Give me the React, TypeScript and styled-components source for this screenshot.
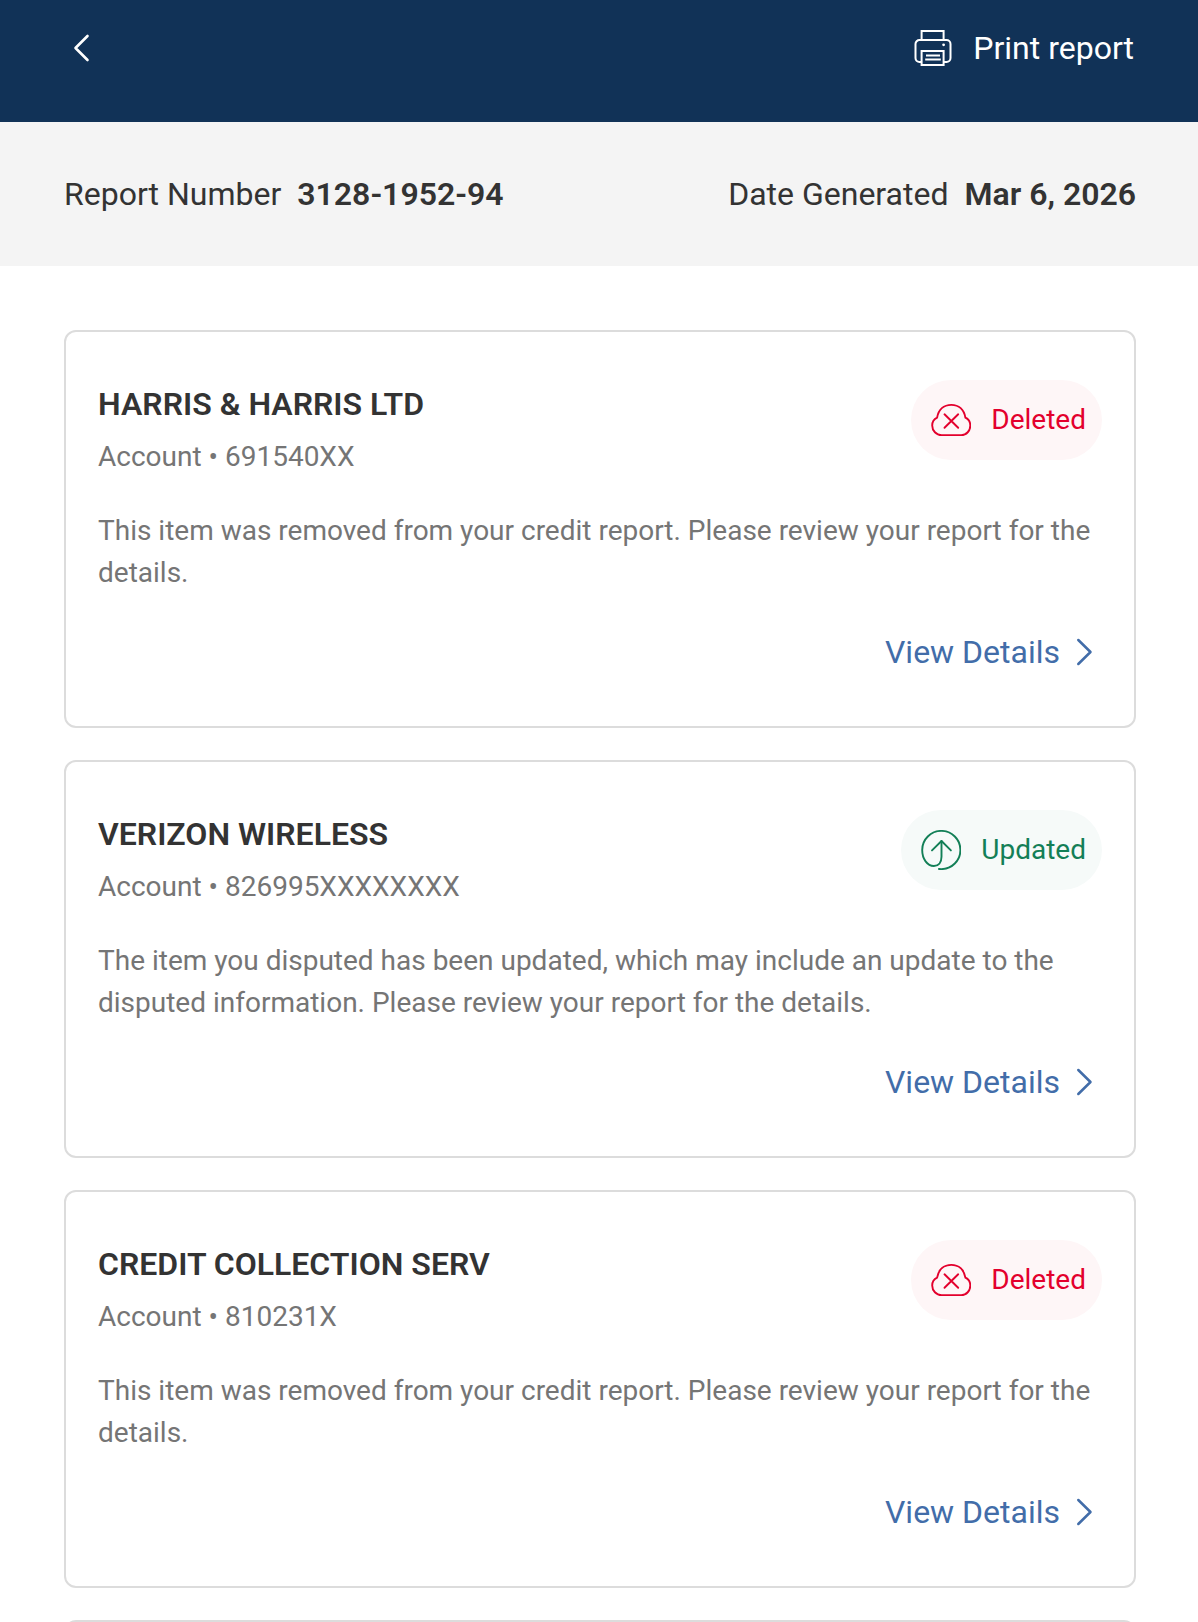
import React from "react";
import styled, { createGlobalStyle } from "styled-components";

const GlobalStyle = createGlobalStyle`
  *, *::before, *::after { box-sizing: border-box; }
  html, body { margin: 0; background: #fff; }
  body {
    font-family: Roboto, "Liberation Sans", sans-serif;
    color: #333;
    height: 1622px;
    overflow: hidden;
  }
`;

const Page = styled.div`
  height: 1622px;
  overflow: hidden;
  display: flex;
  flex-direction: column;
`;

const TopBar = styled.header`
  flex: none;
  height: 122px;
  padding: 24px 62px 0 64px;
  display: flex;
  justify-content: space-between;
  align-items: flex-start;
  background: #113257;
  color: #fff;
`;

const IconButton = styled.button`
  display: flex;
  align-items: center;
  height: 48px;
  padding: 0 0 0 8px;
  border: 0;
  background: none;
  color: inherit;
`;

const PrintButton = styled(IconButton)`
  gap: 21px;
  padding: 0 2px 0 0;
  font: 400 32px/48px Roboto, "Liberation Sans", sans-serif;
`;

const SummaryBar = styled.section`
  flex: none;
  height: 144px;
  padding: 48px 62px 48px 64px;
  display: flex;
  justify-content: space-between;
  background: #f4f4f4;
  font-size: 32px;
  line-height: 48px;
`;

const SummaryItem = styled.div`
  display: flex;
  gap: 16px;
`;

const SummaryLabel = styled.span`
  font-weight: 400;
`;

const SummaryValue = styled.strong`
  font-weight: 600;
`;

const CardList = styled.main`
  padding: 64px 62px 0 64px;
  display: flex;
  flex-direction: column;
  gap: 32px;
`;

const Card = styled.article`
  flex: none;
  height: 398px;
  padding: 48px 32px;
  border: 2px solid #dcdcdc;
  border-radius: 12px;
  display: flex;
  flex-direction: column;
`;

const CardHead = styled.div`
  display: flex;
  justify-content: space-between;
  align-items: flex-start;
  height: 98px;
`;

const Creditor = styled.h2`
  margin: 0 0 8px;
  font-size: 32px;
  line-height: 48px;
  font-weight: 600;
`;

const Account = styled.div`
  font-size: 28px;
  line-height: 42px;
  color: #757575;
`;

const Description = styled.p`
  margin: 32px 0 0;
  font-size: 28px;
  line-height: 42px;
  color: #757575;
`;

type Status = "Deleted" | "Updated";

const Badge = styled.div<{ $status: Status }>`
  display: flex;
  align-items: center;
  gap: 20px;
  height: 80px;
  padding: 0 16px 0 20px;
  border-radius: 40px;
  font-size: 28px;
  line-height: 40px;
  color: ${(p) => (p.$status === "Deleted" ? "#e3002d" : "#137f57")};
  background: ${(p) => (p.$status === "Deleted" ? "#fef6f7" : "#f6faf9")};
`;

const DetailsLink = styled.a`
  align-self: flex-end;
  display: flex;
  align-items: center;
  gap: 16px;
  margin-top: 34px;
  padding-right: 8px;
  font-size: 32px;
  line-height: 48px;
  color: #426da9;
`;

const BackIcon = () => (
  <svg width="18" height="28" viewBox="0 0 18 28" fill="none" stroke="currentColor" strokeWidth="2.6" strokeLinecap="round" strokeLinejoin="round">
    <path d="M15.500 2 3.500 14l12 12" />
  </svg>
);

const NextIcon = () => (
  <svg width="18" height="28" viewBox="0 0 18 28" fill="none" stroke="currentColor" strokeWidth="2.5" strokeLinecap="round" strokeLinejoin="round">
    <path d="m2.300 2 12.200 12-12.200 12" />
  </svg>
);

const PrinterIcon = () => (
  <svg width="38" height="36" viewBox="0 0 38 36" fill="none" stroke="currentColor" strokeWidth="2">
    <path d="M7.600 10V1h22v9M7.600 32H5.500a4 4 0 0 1-4-4V14a4 4 0 0 1 4-4h27a4 4 0 0 1 4 4v14a4 4 0 0 1-4 4h-2.900" />
    <path d="M7.600 21h22v14h-22zM12 25.600h14M11.200 29.600h15.600" />
    <circle cx="29.600" cy="14.800" r="1.400" fill="currentColor" stroke="none" />
  </svg>
);

const DeletedIcon = () => (
  <svg width="40" height="40" viewBox="0 0 40 40" fill="none" stroke="currentColor" strokeWidth="1.9" strokeLinecap="round">
    <path d="M10.600 35.100h19.600c5.300 0 9.100-4.400 9.100-9.600 0-3.600-2-6.600-4.900-7.900C33 9.800 27.900 4.900 20.300 4.900S7.500 9.800 6.100 17.600C3.200 18.900 1.200 21.900 1.200 25.500c0 5.200 4.100 9.600 9.400 9.600Z" />
    <path d="m13.500 14.300 13.700 13.500M27.200 14.300 13.500 27.800" />
  </svg>
);

const UpdatedIcon = () => (
  <svg width="40" height="40" viewBox="0 0 40 40" fill="none" stroke="currentColor" strokeWidth="1.9" strokeLinecap="round" strokeLinejoin="round">
    <path d="M17.900 39c.8.100 1.600.100 2.400.100A19.100 19.100 0 1 0 1.200 20c0 9 5.100 16 11.700 16 4.500 0 7.600-3.400 7.600-9.200V11" />
    <path d="M11 20.400 20.500 11l9.400 9.400" />
  </svg>
);

interface Dispute {
  creditor: string;
  account: string;
  status: Status;
}

const disputes: Dispute[] = [
  { creditor: "HARRIS & HARRIS LTD", account: "691540XX", status: "Deleted" },
  { creditor: "VERIZON WIRELESS", account: "826995XXXXXXXX", status: "Updated" },
  { creditor: "CREDIT COLLECTION SERV", account: "810231X", status: "Deleted" },
];

const descriptions: Record<Status, string> = {
  Deleted:
    "This item was removed from your credit report. Please review your report for the details.",
  Updated:
    "The item you disputed has been updated, which may include an update to the disputed information. Please review your report for the details.",
};

const DisputeCard = ({ creditor, account, status }: Dispute) => (
  <Card>
    <CardHead>
      <div>
        <Creditor>{creditor}</Creditor>
        <Account>Account • {account}</Account>
      </div>
      <Badge $status={status}>
        {status === "Deleted" ? <DeletedIcon /> : <UpdatedIcon />}
        <span>{status}</span>
      </Badge>
    </CardHead>
    <Description>{descriptions[status]}</Description>
    <DetailsLink>
      View Details
      <NextIcon />
    </DetailsLink>
  </Card>
);

export default function App() {
  return (
    <Page>
      <GlobalStyle />
      <TopBar>
        <IconButton aria-label="Back">
          <BackIcon />
        </IconButton>
        <PrintButton>
          <PrinterIcon />
          Print report
        </PrintButton>
      </TopBar>
      <SummaryBar>
        <SummaryItem>
          <SummaryLabel>Report Number</SummaryLabel>
          <SummaryValue>3128-1952-94</SummaryValue>
        </SummaryItem>
        <SummaryItem>
          <SummaryLabel>Date Generated</SummaryLabel>
          <SummaryValue>Mar 6, 2026</SummaryValue>
        </SummaryItem>
      </SummaryBar>
      <CardList>
        {disputes.map((d) => (
          <DisputeCard key={d.creditor} {...d} />
        ))}
        <Card />
      </CardList>
    </Page>
  );
}
